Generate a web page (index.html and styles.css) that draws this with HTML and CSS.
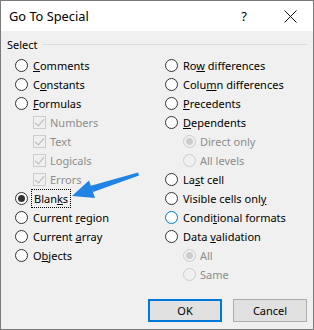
FILE: index.html
```html
<!DOCTYPE html>
<html lang="en">
<head>
    <meta charset="UTF-8">
    <title>Go To Special</title>
    <link rel="stylesheet" href="styles.css">
</head>
<body>
    <div class="dialog">
        <div class="title-bar">
            <span class="title">Go To Special</span>
            <span class="help">?</span>
            <span class="close">
                <svg width="13" height="13" viewBox="0 0 13 13"><path d="M0.5 0.5 L12.5 12.5 M12.5 0.5 L0.5 12.5" stroke="#111" stroke-width="1" fill="none"/></svg>
            </span>
        </div>

        <div class="content">
            <div class="group-label"><span>Select</span><div class="group-line"></div></div>

            <div class="columns">
                <div class="column">
                    <div class="row"><span class="radio"></span><span><u>C</u>omments</span></div>
                    <div class="row"><span class="radio"></span><span>C<u>o</u>nstants</span></div>
                    <div class="row"><span class="radio"></span><span><u>F</u>ormulas</span></div>
                    <div class="row sub disabled"><span class="check"></span><span>Numbers</span></div>
                    <div class="row sub disabled"><span class="check"></span><span>Text</span></div>
                    <div class="row sub disabled"><span class="check"></span><span>Logicals</span></div>
                    <div class="row sub disabled"><span class="check"></span><span>Errors</span></div>
                    <div class="row"><span class="radio checked"></span><span class="focus">Blan<u>k</u>s</span></div>
                    <div class="row"><span class="radio"></span><span>Current <u>r</u>egion</span></div>
                    <div class="row"><span class="radio"></span><span>Current <u>a</u>rray</span></div>
                    <div class="row"><span class="radio"></span><span>O<u>b</u>jects</span></div>
                </div>
                <div class="column">
                    <div class="row"><span class="radio"></span><span>Ro<u>w</u> differences</span></div>
                    <div class="row"><span class="radio"></span><span>Colu<u>m</u>n differences</span></div>
                    <div class="row"><span class="radio"></span><span><u>P</u>recedents</span></div>
                    <div class="row"><span class="radio"></span><span><u>D</u>ependents</span></div>
                    <div class="row sub disabled"><span class="radio checked"></span><span>Direct only</span></div>
                    <div class="row sub disabled"><span class="radio"></span><span>All levels</span></div>
                    <div class="row"><span class="radio"></span><span>La<u>s</u>t cell</span></div>
                    <div class="row"><span class="radio"></span><span>Visible cells onl<u>y</u></span></div>
                    <div class="row"><span class="radio hover"></span><span>Condi<u>t</u>ional formats</span></div>
                    <div class="row"><span class="radio"></span><span>Data <u>v</u>alidation</span></div>
                    <div class="row sub disabled"><span class="radio checked"></span><span>All</span></div>
                    <div class="row sub disabled"><span class="radio"></span><span>Same</span></div>
                </div>
            </div>

            <div class="buttons">
                <button class="btn default">OK</button>
                <button class="btn">Cancel</button>
            </div>
        </div>

        <!-- annotation arrow pointing at Blanks -->
        <svg class="arrow" width="314" height="330" viewBox="0 0 314 330">
            <polygon points="138,172.5 139,175.5 93,192 90,186" fill="#1f84e3"/>
            <polygon points="72,196 89,180.5 95,198" fill="#1f84e3"/>
        </svg>
    </div>
</body>
</html>
```

FILE: styles.css
```css
* {
    box-sizing: border-box;
}

body {
    margin: 0;
    font-family: "Noto Sans", sans-serif;
    font-size: 11px;
    color: #000;
    background: #fff;
}

.dialog {
    position: relative;
    width: 314px;
    height: 330px;
    border: 1px solid #7a7a7a;
    background-color: #f0f0f0;
    display: flex;
    flex-direction: column;
}

.title-bar {
    height: 30px;
    background-color: #fff;
    display: flex;
    align-items: center;
    padding-left: 8px;
}

.title {
    font-size: 12.8px;
    flex: 1;
}

.help {
    font-size: 13px;
    width: 46px;
    text-align: center;
}

.close {
    width: 46px;
    display: flex;
    justify-content: center;
    align-items: center;
}

.content {
    flex: 1;
    display: flex;
    flex-direction: column;
    padding: 4px 6px 0 6px;
}

.group-label {
    display: flex;
    align-items: center;
    gap: 4px;
    height: 18px;
}

.group-line {
    flex: 1;
    height: 1px;
    background-color: #dcdcdc;
}

.columns {
    display: grid;
    grid-template-columns: 150px 1fr;
    padding-left: 8px;
    margin-top: 3px;
}

.row {
    height: 19px;
    display: flex;
    align-items: center;
    gap: 5px;
    white-space: nowrap;
}

.row.sub {
    padding-left: 18px;
    gap: 4px;
}

.row.disabled {
    color: #8d8d8d;
}

.radio {
    width: 13px;
    height: 13px;
    border: 1px solid #333;
    border-radius: 50%;
    background-color: #fff;
    display: flex;
    align-items: center;
    justify-content: center;
    flex: 0 0 13px;
}

.radio.checked::after {
    content: "";
    width: 7px;
    height: 7px;
    border-radius: 50%;
    background-color: #333;
}

.radio.hover {
    border-color: #0078d7;
}

.disabled .radio {
    border-color: #cccccc;
    background-color: #f0f0f0;
}

.disabled .radio.checked::after {
    background-color: #cccccc;
}

.check {
    width: 13px;
    height: 13px;
    border: 1px solid #cccccc;
    flex: 0 0 13px;
    position: relative;
}

.check::after {
    content: "";
    position: absolute;
    left: 3px;
    top: 0px;
    width: 4px;
    height: 8px;
    border-right: 1px solid #b5b5b5;
    border-bottom: 1px solid #b5b5b5;
    transform: rotate(40deg);
}

.focus {
    outline: 1px dotted #000;
    outline-offset: 1px;
    padding: 0 1px;
}

.buttons {
    display: flex;
    justify-content: flex-end;
    gap: 11px;
    margin-top: auto;
    margin-bottom: 7px;
}

.btn {
    font-family: "Noto Sans", sans-serif;
    font-size: 11px;
    width: 74px;
    height: 23px;
    background-color: #e1e1e1;
    border: 1px solid #adadad;
    padding: 0;
    color: #000;
}

.btn.default {
    border: 2px solid #0078d7;
}

.arrow {
    position: absolute;
    left: -1px;
    top: -1px;
    pointer-events: none;
}
```
